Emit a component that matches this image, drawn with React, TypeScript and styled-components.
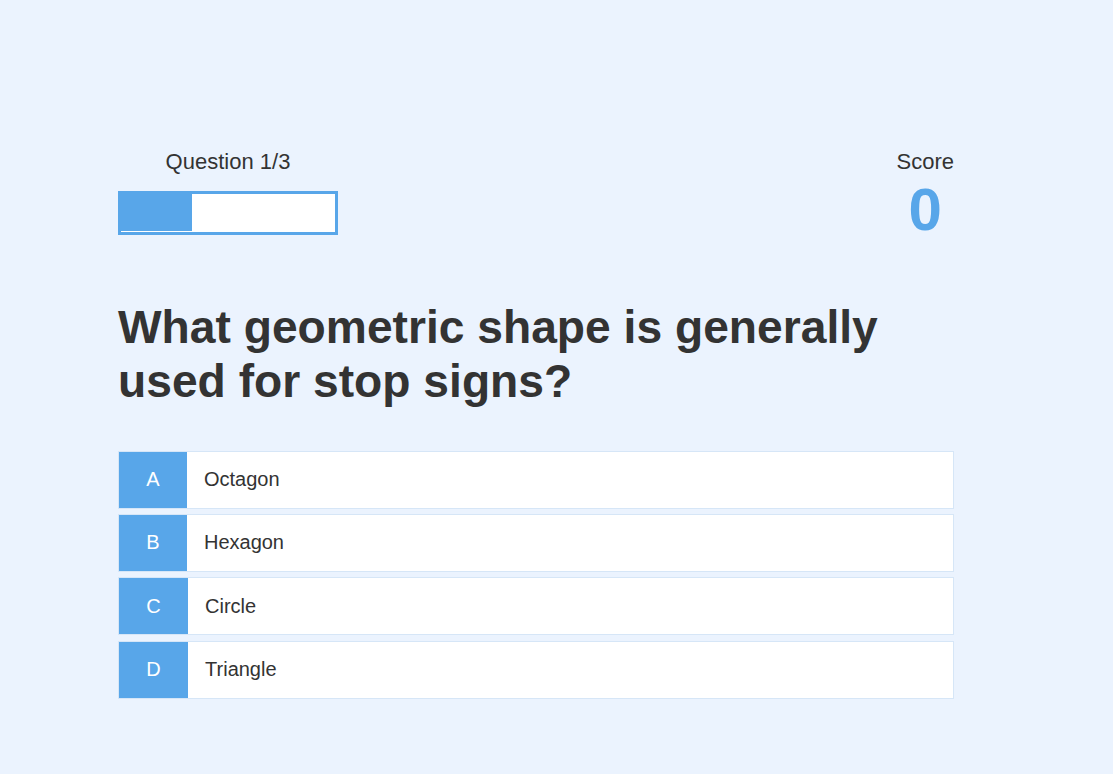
import React from "react";
import styled, { createGlobalStyle } from "styled-components";

const BLUE = "#58a6e9";
const TEXT = "#333333";

const GlobalStyle = createGlobalStyle`
  html, body {
    margin: 0;
    padding: 0;
    background: #ebf3fe;
    font-family: "Liberation Sans", Arial, sans-serif;
    color: ${TEXT};
  }
  * { box-sizing: border-box; }
`;

const Page = styled.div`
  min-height: 774px;
  padding: 149px 0 0 118px;
`;

const Quiz = styled.main`
  width: 836px;
`;

const Header = styled.header`
  display: flex;
  justify-content: space-between;
  align-items: flex-start;
`;

const ProgressBlock = styled.div`
  width: 220px;
  display: flex;
  flex-direction: column;
  align-items: center;
`;

const Label = styled.div`
  font-size: 22px;
  line-height: normal;
`;

const Bar = styled.div`
  margin-top: 16px;
  width: 220px;
  height: 44px;
  border: 3px solid ${BLUE};
  background: #ffffff;
`;

const Fill = styled.div`
  height: 37px;
  background: ${BLUE};
`;

const ScoreBlock = styled.div`
  display: flex;
  flex-direction: column;
  align-items: center;
`;

const ScoreValue = styled.div`
  font-size: 60px;
  font-weight: 700;
  line-height: normal;
  color: ${BLUE};
`;

const Question = styled.h1`
  margin: 56px 0 0;
  font-size: 46.2px;
  font-weight: 700;
  line-height: normal;
  color: ${TEXT};
`;

const Options = styled.div`
  margin-top: 42.6px;
  display: flex;
  flex-direction: column;
  gap: 5.4px;
`;

const Option = styled.button`
  display: flex;
  align-items: stretch;
  width: 100%;
  height: 58px;
  padding: 0;
  border: 1px solid #d6e6f7;
  background: #ffffff;
  font-family: inherit;
  text-align: left;
  cursor: pointer;
`;

const Letter = styled.span`
  display: flex;
  align-items: center;
  justify-content: center;
  padding: 0 27.3px;
  background: ${BLUE};
  color: #ffffff;
  font-size: 20px;
`;

const OptionText = styled.span`
  display: flex;
  align-items: center;
  padding-left: 17px;
  font-size: 20px;
  color: ${TEXT};
`;

const answers = [
  { letter: "A", text: "Octagon" },
  { letter: "B", text: "Hexagon" },
  { letter: "C", text: "Circle" },
  { letter: "D", text: "Triangle" },
];

export default function App() {
  const current = 1;
  const total = 3;
  return (
    <>
      <GlobalStyle />
      <Page>
        <Quiz>
          <Header>
            <ProgressBlock>
              <Label>
                Question {current}/{total}
              </Label>
              <Bar>
                <Fill style={{ width: `${(current / total) * 100}%` }} />
              </Bar>
            </ProgressBlock>
            <ScoreBlock>
              <Label>Score</Label>
              <ScoreValue>0</ScoreValue>
            </ScoreBlock>
          </Header>
          <Question>
            What geometric shape is generally
            <br />
            used for stop signs?
          </Question>
          <Options>
            {answers.map((a) => (
              <Option key={a.letter}>
                <Letter>{a.letter}</Letter>
                <OptionText>{a.text}</OptionText>
              </Option>
            ))}
          </Options>
        </Quiz>
      </Page>
    </>
  );
}
